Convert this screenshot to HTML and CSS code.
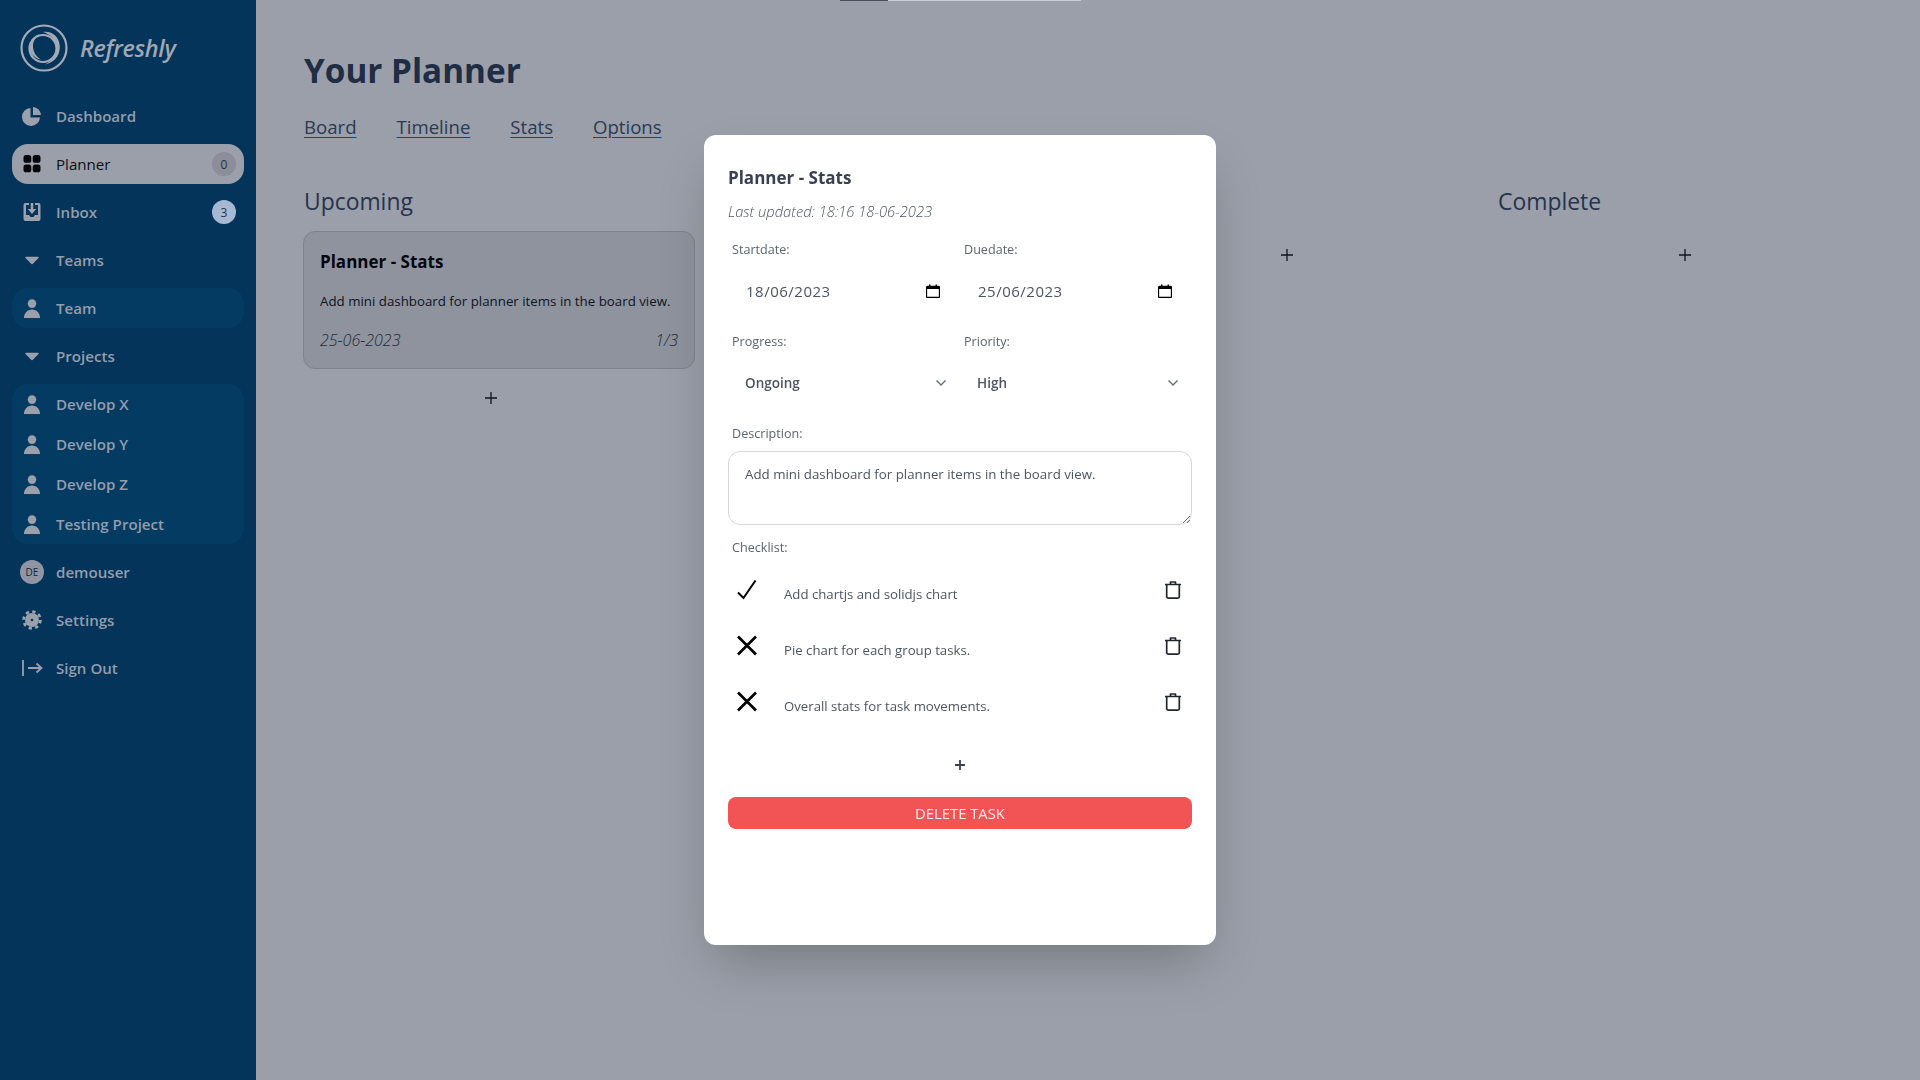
FILE: index.html
```html
<!DOCTYPE html>
<html lang="en">
<head>
<meta charset="utf-8">
<title>Refreshly - Your Planner</title>
<link rel="stylesheet" href="styles.css">
</head>
<body>
<div class="app">
  <aside class="sidebar">
    <div class="brand">
      <svg class="logo" viewBox="0 0 48 48" fill="none" stroke="#a3aab5">
        <circle cx="24" cy="24" r="22.500" stroke-width="2.200"/>
        <circle cx="23" cy="24.500" r="13.500" stroke-width="2.200"/>
        <path d="M23 8c10-1.500 17 6 16.800 15.500C39.500 33 33 39 25 40.500c6-3 11-9 11-16.500 0-8-5-13.500-13-16z" fill="#a3aab5" stroke="none"/>
        <path d="M9.500 21c.8-5 5-9.500 10-10.500-3.500 2.500-6.500 6.500-6.500 11.500 0 6 3 10.500 8 13.500-7-1-12.500-7.500-11.500-14.500z" fill="#a3aab5" stroke="none"/>
      </svg>
      <span class="brand-name">Refreshly</span>
    </div>
    <nav class="nav">
      <a class="nav-item">
        <svg class="nav-icon" viewBox="0 0 24 24"><path d="M10.500 4a9 9 0 1 0 9.500 9.500h-9.500z"/><path d="M13 3a8.500 8.500 0 0 1 8 8h-8z"/></svg>
        <span>Dashboard</span>
      </a>
      <a class="nav-item is-active">
        <svg class="nav-icon" viewBox="0 0 24 24"><rect x="3.500" y="3" width="7.800" height="7.800" rx="2.600"/><rect x="12.700" y="3" width="7.800" height="7.800" rx="2.600"/><rect x="3.500" y="12.500" width="7.800" height="7.800" rx="2.600"/><rect x="12.700" y="12.500" width="7.800" height="7.800" rx="2.600"/></svg>
        <span>Planner</span>
        <span class="badge badge-muted">0</span>
      </a>
      <a class="nav-item">
        <svg class="nav-icon" viewBox="0 0 24 24"><path d="M3.500 5a2 2 0 0 1 2-2H9v2H6v10h3l1.500 2h3L15 15h3V5h-3V3h3.500a2 2 0 0 1 2 2v14a2 2 0 0 1-2 2h-13a2 2 0 0 1-2-2z"/><path d="M10.700 3h2.600v6h3l-4.300 5-4.300-5h3z"/></svg>
        <span>Inbox</span>
        <span class="badge badge-info">3</span>
      </a>
      <a class="nav-item">
        <svg class="nav-icon" viewBox="0 0 24 24"><path class="caret" d="M6 9.500h12l-6 6z"/></svg>
        <span>Teams</span>
      </a>
      <div class="nav-group">
        <a class="nav-item">
          <svg class="nav-icon" viewBox="0 0 24 24"><circle cx="12" cy="7.600" r="4.300"/><path d="M4 22c0-5 3.500-8.500 8-8.500s8 3.500 8 8.500z"/></svg>
          <span>Team</span>
        </a>
      </div>
      <a class="nav-item">
        <svg class="nav-icon" viewBox="0 0 24 24"><path class="caret" d="M6 9.500h12l-6 6z"/></svg>
        <span>Projects</span>
      </a>
      <div class="nav-group">
        <a class="nav-item">
          <svg class="nav-icon" viewBox="0 0 24 24"><circle cx="12" cy="7.600" r="4.300"/><path d="M4 22c0-5 3.500-8.500 8-8.500s8 3.500 8 8.500z"/></svg>
          <span>Develop X</span>
        </a>
        <a class="nav-item">
          <svg class="nav-icon" viewBox="0 0 24 24"><circle cx="12" cy="7.600" r="4.300"/><path d="M4 22c0-5 3.500-8.500 8-8.500s8 3.500 8 8.500z"/></svg>
          <span>Develop Y</span>
        </a>
        <a class="nav-item">
          <svg class="nav-icon" viewBox="0 0 24 24"><circle cx="12" cy="7.600" r="4.300"/><path d="M4 22c0-5 3.500-8.500 8-8.500s8 3.500 8 8.500z"/></svg>
          <span>Develop Z</span>
        </a>
        <a class="nav-item">
          <svg class="nav-icon" viewBox="0 0 24 24"><circle cx="12" cy="7.600" r="4.300"/><path d="M4 22c0-5 3.500-8.500 8-8.500s8 3.500 8 8.500z"/></svg>
          <span>Testing Project</span>
        </a>
      </div>
      <a class="nav-item">
        <span class="avatar">DE</span>
        <span>demouser</span>
      </a>
      <a class="nav-item">
        <svg class="nav-icon" viewBox="0 0 24 24"><circle cx="12" cy="12" r="7"/><circle cx="12" cy="12" r="8.400" fill="none" stroke="#9ba0aa" stroke-width="2.800" stroke-dasharray="3.300 3.300"/><circle cx="12" cy="12" r="1.300" fill="#04345a"/></svg>
        <span>Settings</span>
      </a>
      <a class="nav-item">
        <svg class="nav-icon nav-icon-line" viewBox="0 0 24 24"><path d="M3 4v16M8 12h13.500M16.500 7.500l5 4.500-5 4.500"/></svg>
        <span>Sign Out</span>
      </a>
    </nav>
  </aside>

  <main class="main">
    <h1 class="page-title">Your Planner</h1>
    <div class="tabs">
      <a class="tab">Board</a>
      <a class="tab">Timeline</a>
      <a class="tab">Stats</a>
      <a class="tab">Options</a>
    </div>
    <div class="board">
      <section class="column">
        <h2 class="column-title">Upcoming</h2>
        <article class="card">
          <h3 class="card-title">Planner - Stats</h3>
          <p class="card-text">Add mini dashboard for planner items in the board view.</p>
          <div class="card-meta"><span>25-06-2023</span><span>1/3</span></div>
        </article>
        <div class="add-row"><svg class="plus" viewBox="0 0 14 14"><path d="M7 1v12M1 7h12"/></svg></div>
      </section>
      <section class="column">
        <h2 class="column-title column-title-empty"></h2>
        <div class="add-row add-row-first"><svg class="plus" viewBox="0 0 14 14"><path d="M7 1v12M1 7h12"/></svg></div>
      </section>
      <section class="column">
        <h2 class="column-title column-title-empty"></h2>
        <div class="add-row add-row-first"><svg class="plus" viewBox="0 0 14 14"><path d="M7 1v12M1 7h12"/></svg></div>
      </section>
      <section class="column">
        <h2 class="column-title">Complete</h2>
        <div class="add-row add-row-first"><svg class="plus" viewBox="0 0 14 14"><path d="M7 1v12M1 7h12"/></svg></div>
      </section>
    </div>
  </main>
</div>

<div class="load-bar"><span class="load-bar-done"></span><span class="load-bar-rest"></span></div>

<div class="modal-layer">
  <div class="modal">
    <h2 class="modal-title">Planner - Stats</h2>
    <p class="modal-updated">Last updated: 18:16 18-06-2023</p>
    <div class="field-grid">
      <div class="field">
        <label class="field-label">Startdate:</label>
        <div class="control control-date"><span>18/06/2023</span>
          <svg class="cal" viewBox="0 0 14 14"><path d="M1.500 2.500h11a1 1 0 0 1 1 1v9a1 1 0 0 1-1 1h-11a1 1 0 0 1-1-1v-9a1 1 0 0 1 1-1z" fill="none" stroke="#000" stroke-width="1.300"/><path d="M.5 2.500h13v2.500H.5zM3 .5h1.500v2H3zM9.500.5H11v2H9.500z"/></svg>
        </div>
      </div>
      <div class="field">
        <label class="field-label">Duedate:</label>
        <div class="control control-date"><span>25/06/2023</span>
          <svg class="cal" viewBox="0 0 14 14"><path d="M1.500 2.500h11a1 1 0 0 1 1 1v9a1 1 0 0 1-1 1h-11a1 1 0 0 1-1-1v-9a1 1 0 0 1 1-1z" fill="none" stroke="#000" stroke-width="1.300"/><path d="M.5 2.500h13v2.500H.5zM3 .5h1.500v2H3zM9.500.5H11v2H9.500z"/></svg>
        </div>
      </div>
      <div class="field">
        <label class="field-label">Progress:</label>
        <div class="control control-select"><span>Ongoing</span>
          <svg class="chev" viewBox="0 0 12 8"><path d="M1.500 1.500L6 6l4.500-4.500"/></svg>
        </div>
      </div>
      <div class="field">
        <label class="field-label">Priority:</label>
        <div class="control control-select"><span>High</span>
          <svg class="chev" viewBox="0 0 12 8"><path d="M1.500 1.500L6 6l4.500-4.500"/></svg>
        </div>
      </div>
    </div>
    <label class="field-label field-label-desc">Description:</label>
    <textarea class="desc" readonly>Add mini dashboard for planner items in the board view.</textarea>
    <label class="field-label field-label-check">Checklist:</label>
    <ul class="checklist">
      <li class="check-row">
        <svg class="state" viewBox="0 0 24 24"><path d="M3 14.500l5.500 5.500L20.500 2.500" stroke-width="2"/></svg>
        <span class="check-text">Add chartjs and solidjs chart</span>
        <svg class="trash" viewBox="0 0 24 24"><path d="M4 6.500h16M9.500 6.500V4h5v2.500M5.700 6.500v12A1.700 1.700 0 0 0 7.400 20.200h9.200a1.700 1.700 0 0 0 1.700-1.700v-12"/></svg>
      </li>
      <li class="check-row">
        <svg class="state" viewBox="0 0 24 24"><path d="M3 2.500l18 18M21 2.500l-18 18" stroke-width="2.700"/></svg>
        <span class="check-text">Pie chart for each group tasks.</span>
        <svg class="trash" viewBox="0 0 24 24"><path d="M4 6.500h16M9.500 6.500V4h5v2.500M5.700 6.500v12A1.700 1.700 0 0 0 7.400 20.200h9.200a1.700 1.700 0 0 0 1.700-1.700v-12"/></svg>
      </li>
      <li class="check-row">
        <svg class="state" viewBox="0 0 24 24"><path d="M3 2.500l18 18M21 2.500l-18 18" stroke-width="2.700"/></svg>
        <span class="check-text">Overall stats for task movements.</span>
        <svg class="trash" viewBox="0 0 24 24"><path d="M4 6.500h16M9.500 6.500V4h5v2.500M5.700 6.500v12A1.700 1.700 0 0 0 7.400 20.200h9.200a1.700 1.700 0 0 0 1.700-1.700v-12"/></svg>
      </li>
    </ul>
    <div class="check-add"><svg class="plus plus-modal" viewBox="0 0 14 14"><path d="M7 2v10M2 7h10"/></svg></div>
    <button class="delete-btn" type="button">DELETE TASK</button>
  </div>
</div>
</body>
</html>
```

FILE: styles.css
```css
* { box-sizing: border-box; }
html, body { margin: 0; height: 100%; overflow: hidden; }
body {
  font-family: "Open Sans", "Noto Sans", "Liberation Sans", sans-serif;
  background: #9a9fa9;
  color: #1f2d47;
}
h1, h2, h3, p, ul { margin: 0; padding: 0; }
ul { list-style: none; }

.app { display: flex; height: 1080px; }

/* Sidebar */
.sidebar { width: 256px; flex: none; background: #04345a; padding: 0 12px; }
.brand { height: 96px; display: flex; align-items: center; gap: 12px; padding-left: 8px; }
.logo { width: 48px; height: 48px; flex: none; }
.brand-name { font-size: 23.400px; font-weight: 600; font-style: italic; color: #9fa8b4; letter-spacing: -.3px; }
.nav { display: flex; flex-direction: column; gap: 8px; }
.nav-item {
  display: flex; align-items: center; gap: 12px;
  height: 40px; padding: 0 8px;
  border-radius: 16px;
  font-size: 15.100px; font-weight: 600; color: #929dad;
}
.nav-icon { width: 24px; height: 24px; flex: none; fill: #9ba0aa; }
.nav-icon-line { fill: none; stroke: #9ba0aa; stroke-width: 1.800; }
.caret { stroke: #9ba0aa; stroke-width: 1.500; stroke-linejoin: round; }
.nav-item.is-active { background: #9a9fa9; color: #0b0f18; font-weight: 400; }
.nav-item.is-active .nav-icon { fill: #05070c; }
.nav-group { background: #043b62; border-radius: 16px; }
.badge {
  margin-left: auto; width: 24px; height: 24px; border-radius: 50%;
  display: flex; align-items: center; justify-content: center;
  font-size: 12px; font-weight: 400;
}
.badge-muted { background: #8b8e98; color: #2a2e38; }
.badge-info { background: #a7b9d2; color: #27344f; }
.avatar {
  width: 24px; height: 24px; flex: none; border-radius: 50%;
  background: #8f95a3; color: #1c2230;
  display: flex; align-items: center; justify-content: center;
  font-size: 10px; font-weight: 400;
}

/* Main */
.main { flex: 1; padding: 46px 0 0 48px; min-width: 0; }
.page-title { font-size: 33.300px; line-height: 48px; font-weight: 700; color: #1f2d45; }
.tabs { display: flex; gap: 40px; margin-top: 19px; height: 28px; }
.tab {
  font-size: 18.600px; line-height: 28px; color: #2b3a55;
  text-decoration: underline; text-decoration-color: #104b7a; text-underline-offset: 3px;
}
.board { display: grid; grid-template-columns: repeat(4, 398px); margin-top: 44px; }
.column-title { font-size: 22.900px; font-weight: 400; line-height: 32px; height: 46px; padding-top: 1px; color: #27334f; }
.column-title-empty { visibility: hidden; }
.card {
  width: 392px; height: 138px; margin-left: -1px;
  background: #8f939e; border: 1px solid #7f838e; border-radius: 12px;
  padding: 15px 16px 0;
}
.card-title { font-size: 17px; line-height: 30px; font-weight: 700; color: #05070c; }
.card-text { font-size: 13.300px; line-height: 20px; margin-top: 14px; color: #10141e; }
.card-meta {
  display: flex; justify-content: space-between;
  margin-top: 19px; font-size: 16px; font-weight: 300; line-height: 20px; font-style: italic; color: #242a3a;
}
.add-row { width: 374px; display: flex; justify-content: center; align-items: center; height: 48px; margin-top: 5px; }
.add-row-first { margin-top: 0; }
.plus { width: 14px; height: 14px; fill: none; stroke: #10141e; stroke-width: 1.300; }

/* Stray progress bar along the top edge */
.load-bar { position: fixed; top: 0; left: 840px; display: flex; height: 1px; }
.load-bar-done { width: 48px; background: #4a5060; }
.load-bar-rest { width: 193px; background: #c9ced8; }

/* Modal */
.modal-layer { position: fixed; inset: 0; display: flex; align-items: center; justify-content: center; }
.modal {
  width: 512px; height: 810px; padding: 24px;
  background: #fff; border-radius: 12px; color: #4b5563;
  box-shadow: 0 25px 50px -12px rgba(0, 0, 0, .25);
}
.modal-title { font-size: 17px; line-height: 36px; padding-top: 1px; height: 36px; font-weight: 700; color: #374151; }
.modal-updated { font-size: 14.700px; line-height: 32px; font-style: italic; font-weight: 300; color: #4b5563; margin-bottom: 10px; }
.field-grid { display: grid; grid-template-columns: 232px 232px; row-gap: 14px; }
.field-label { display: block; height: 24px; line-height: 26px; font-size: 12.600px; padding-left: 4px; color: #5b6472; margin-bottom: 6px; }
.control { height: 48px; display: flex; align-items: center; padding-left: 17px; font-size: 14px; color: #4b5563; }
.control-date { font-size: 15px; letter-spacing: .5px; padding-left: 18px; }
.cal { width: 14px; height: 14px; margin-left: auto; margin-right: 20px; flex: none; }
.control-select { font-weight: 600; font-size: 13.500px; }
.chev { width: 12px; height: 8px; margin-left: auto; margin-right: 13px; flex: none; fill: none; stroke: #6b7280; stroke-width: 1.500; }
.field-label-desc { margin-top: 14px; }
.desc {
  display: block; width: 464px; height: 74px; padding: 12px 16px;
  border: 1px solid #d6d8dc; border-radius: 12px;
  font: 13.300px/20px "Open Sans", "Noto Sans", sans-serif; color: #4b5563; background: #fff; outline: none;
}
.field-label-check { margin: 10px 0 3px; }
.check-row { height: 56px; display: flex; align-items: center; padding: 0 7px; }
.state { width: 24px; height: 24px; flex: none; fill: none; stroke: #000; }
.check-text { margin-left: 25px; padding-top: 8px; font-size: 13.200px; line-height: 20px; color: #4b5563; }
.trash { width: 24px; height: 24px; margin-left: auto; flex: none; fill: none; stroke: #222630; stroke-width: 1.700; stroke-linejoin: round; }
.check-add { height: 67px; padding-top: 28px; display: flex; justify-content: center; align-items: flex-start; }
.plus-modal { stroke: #374151; stroke-width: 1.800; }
.delete-btn {
  display: block; width: 464px; height: 32px; padding: 0;
  border: 0; border-radius: 8px; background: #f25455; color: #fde8e8;
  font: 400 14.800px "Open Sans", "Noto Sans", sans-serif;
}
```
